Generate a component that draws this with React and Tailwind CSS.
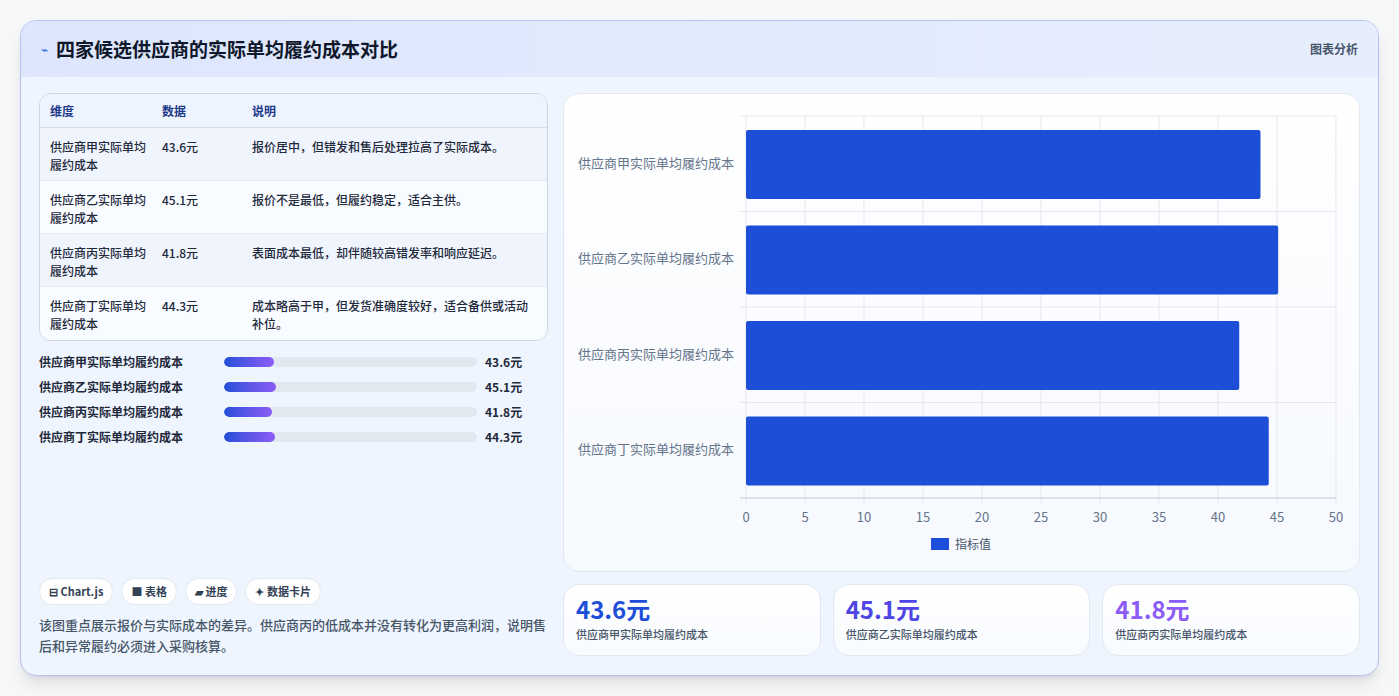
const F = { fontFamily: '"Noto Sans CJK SC","Noto Sans",sans-serif' };
const rows = [
  ['供应商甲实际单均履约成本', 43.6, '报价居中，但错发和售后处理拉高了实际成本。'],
  ['供应商乙实际单均履约成本', 45.1, '报价不是最低，但履约稳定，适合主供。'],
  ['供应商丙实际单均履约成本', 41.8, '表面成本最低，却伴随较高错发率和响应延迟。'],
  ['供应商丁实际单均履约成本', 44.3, '成本略高于甲，但发货准确度较好，适合备供或活动补位。'],
];

function Chart() {
  const x0 = 182, x1 = 772, y0 = 22, y1 = 404;
  const sx = (v) => x0 + ((x1 - x0) * v) / 50;
  const band = (y1 - y0) / 4;
  return (
    <svg width="795" height="479" style={F}>
      {[0,5,10,15,20,25,30,35,40,45,50].map((t) => (
        <g key={t}>
          <line x1={sx(t)} x2={sx(t)} y1={y0} y2={y1 + 6} stroke="#e5e7eb" />
          <text x={sx(t)} y={428} fontSize="13" fill="#64748b" textAnchor="middle">{t}</text>
        </g>
      ))}
      {[0,1,2,3,4].map((i) => (
        <line key={i} x1={x0 - 6} x2={x1} y1={y0 + band * i} y2={y0 + band * i} stroke="#e5e7eb" />
      ))}
      <line x1={x0 - 6} x2={x1} y1={y1} y2={y1} stroke="#cbd5e1" />
      {rows.map((r, i) => (
        <g key={i}>
          <rect x={x0} y={y0 + band * i + 14} width={sx(r[1]) - x0} height={69} rx="2" fill="#1d4ed8" />
          <text x={x0 - 12} y={y0 + band * i + band / 2 + 4} fontSize="13" fill="#64748b" textAnchor="end">{r[0]}</text>
        </g>
      ))}
      <rect x="367" y="444" width="18" height="12" fill="#1d4ed8" />
      <text x="391" y="455" fontSize="12" fill="#475569">指标值</text>
    </svg>
  );
}

export default function App() {
  return (
    <div className="w-[1399px] h-[696px] bg-[#f6f7f9] pt-5 px-5" style={F}>
      <div className="h-[656px] rounded-2xl border border-[#b8c2ee] bg-[#eff5fe] overflow-hidden shadow-lg flex flex-col">
        <div className="h-[56px] shrink-0 bg-gradient-to-r from-[#dde6fd] to-[#e6eefd] flex items-center justify-between px-5">
          <div className="flex items-center gap-2">
            <span className="text-[#2563eb] text-xs">⌁</span>
            <span className="text-[19px] font-bold text-[#0f172a]">四家候选供应商的实际单均履约成本对比</span>
          </div>
          <span className="text-xs font-semibold text-[#475569]">图表分析</span>
        </div>
        <div className="flex gap-[15px] px-[18px] pt-4 pb-[19px] flex-1">
          <div className="w-[510px] flex flex-col">
            <div className="rounded-xl border border-[#cbd5e1] overflow-hidden bg-white">
              <div className="flex h-[34px] items-center bg-[#eef4fd] border-b border-[#d6dee9] text-xs font-semibold text-[#1e3a8a]">
                <div className="w-[122px] pl-[10px]">维度</div>
                <div className="w-[90px]">数据</div>
                <div>说明</div>
              </div>
              {rows.map((r, i) => (
                <div key={i} className={`flex h-[53px] pt-[10px] text-xs leading-[18px] text-[#1e293b] font-medium ${i % 2 ? 'bg-[#f8fbff]' : 'bg-[#eff4fd]'} ${i < 3 ? 'border-b border-[#e2e8f0]' : ''}`}>
                  <div className="w-[122px] pl-[10px] pr-2">{r[0]}</div>
                  <div className="w-[90px]">{r[1]}元</div>
                  <div className="flex-1 pr-2">{r[2]}</div>
                </div>
              ))}
            </div>
            <div className="mt-[12px] flex flex-col gap-[7px]">
              {rows.map((r, i) => (
                <div key={i} className="flex items-center h-[18px] text-xs font-semibold text-[#1e293b]">
                  <div className="w-[185px]">{r[0]}</div>
                  <div className="w-[253px] h-[10px] rounded-full bg-[#e2e8f0] overflow-hidden">
                    <div className="h-full rounded-full bg-gradient-to-r from-[#1d4ed8] to-[#8b5cf6]" style={{ width: `${(r[1] / 220) * 100}%` }} />
                  </div>
                  <div className="ml-2 font-bold">{r[1]}元</div>
                </div>
              ))}
            </div>
            <div className="mt-auto flex gap-[8px]">
              {['⊟ Chart.js', '■ 表格', '▰ 进度', '✦ 数据卡片'].map((c) => (
                <span key={c} className="h-[27px] px-[9px] flex items-center rounded-full bg-white border border-[#e2e8f0] text-[11px] font-semibold text-[#334155]">{c}</span>
              ))}
            </div>
            <p className="mt-[9px] text-[13px] leading-[21px] text-[#475569] font-medium">该图重点展示报价与实际成本的差异。供应商丙的低成本并没有转化为更高利润，说明售后和异常履约必须进入采购核算。</p>
          </div>
          <div className="flex-1 flex flex-col gap-[12px]">
            <div className="h-[479px] rounded-2xl bg-gradient-to-b from-white to-[#f6f9fe] border border-[#e2e8f0]">
              <Chart />
            </div>
            <div className="flex gap-[12px]">
              {[['43.6元', 'text-[#1d4ed8]', rows[0][0]], ['45.1元', 'text-[#4f46e5]', rows[1][0]], ['41.8元', 'text-[#8b5cf6]', rows[2][0]]].map((k) => (
                <div key={k[0]} className="flex-1 h-[72px] rounded-2xl bg-gradient-to-b from-white to-[#f8fbff] border border-[#e2e8f0] px-3 pt-[10px]">
                  <div className={`text-[24px] leading-[28px] font-bold ${k[1]}`}>{k[0]}</div>
                  <div className="mt-[3px] text-[11px] text-[#475569] font-medium">{k[2]}</div>
                </div>
              ))}
            </div>
          </div>
        </div>
      </div>
    </div>
  );
}
